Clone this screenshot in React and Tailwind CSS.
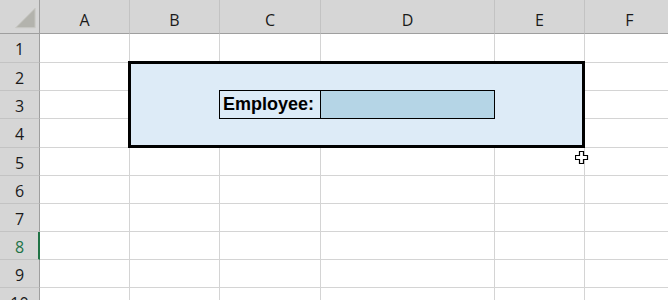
import React from "react";

const COLS = ["A", "B", "C", "D", "E", "F"];
const ROWS = [1, 2, 3, 4, 5, 6, 7, 8, 9, 10];

function inBox(r, c) {
  return r >= 2 && r <= 4 && c >= 1 && c <= 4;
}

export default function App() {
  const cells = [];
  cells.push(
    <div
      key="corner"
      className="bg-[#d6d6d6] border-r border-b border-[#9f9f9f] flex items-end justify-end"
    >
      <svg width="40" height="34" viewBox="0 0 40 34" className="block">
        <polygon points="16,29 36,9 36,29" fill="#b3b3ad" stroke="#c9c9c4" strokeWidth="1" />
      </svg>
    </div>
  );
  COLS.forEach((c) => {
    cells.push(
      <div
        key={"h" + c}
        className="bg-[#d6d6d6] border-b border-b-[#9f9f9f] border-r border-r-[#c3c3c3] flex items-center justify-center pt-[6px] text-[16px] text-[#1a1a1a] font-['Open_Sans',sans-serif]"
      >
        {c}
      </div>
    );
  });
  ROWS.forEach((r) => {
    const sel = r === 8;
    cells.push(
      <div
        key={"r" + r}
        className={
          sel
            ? "bg-[#d6d6d6] border-b border-b-[#c3c3c3] border-r-2 border-r-[#217346] flex items-center justify-center pt-[2px] pl-px text-[16px] text-[#217346] font-['Open_Sans',sans-serif]"
            : "bg-[#d6d6d6] border-b border-b-[#c3c3c3] border-r border-r-[#9f9f9f] flex items-center justify-center pt-[2px] text-[16px] text-[#1a1a1a] font-['Open_Sans',sans-serif]"
        }
      >
        {r}
      </div>
    );
    COLS.forEach((c, ci) => {
      if (inBox(r, ci + 1)) return;
      cells.push(
        <div key={c + r} className="bg-white border-r border-b border-[#d4d4d4]" />
      );
    });
  });

  return (
    <div className="relative w-[668px] h-[300px] overflow-hidden bg-white">
      <div className="grid grid-cols-[40px_90px_90px_101px_174px_90px_90px] grid-rows-[34px_29px_28px_28px_29px_28px_28px_28px_28px_28px_28px] w-[675px]">
        <div className="col-start-3 col-end-7 row-start-3 row-end-6 -ml-[2px] -mt-[2px] border-[3px] border-black bg-[#ddebf7] z-10" />
        <div className="col-start-4 row-start-4 -ml-px -mt-px border border-black bg-[#ddebf7] z-20 flex items-center pl-[3px] text-[18px] font-bold text-black font-['Liberation_Sans',Arial,sans-serif] whitespace-nowrap">
          Employee:
        </div>
        <div className="col-start-5 row-start-4 -mt-px border-t border-r border-b border-black bg-[#b5d5e6] z-20" />
        {cells}
      </div>
      <svg
        width="14"
        height="14"
        viewBox="0 0 14 14"
        className="absolute left-[575px] top-[151px] z-30"
      >
        <polygon
          points="4.5,0.5 8.5,0.5 8.5,4.5 12.5,4.5 12.5,8.5 8.5,8.5 8.5,12.5 4.5,12.5 4.5,8.5 0.5,8.5 0.5,4.5 4.5,4.5"
          fill="white"
          stroke="black"
          strokeWidth="1.2"
        />
      </svg>
    </div>
  );
}
